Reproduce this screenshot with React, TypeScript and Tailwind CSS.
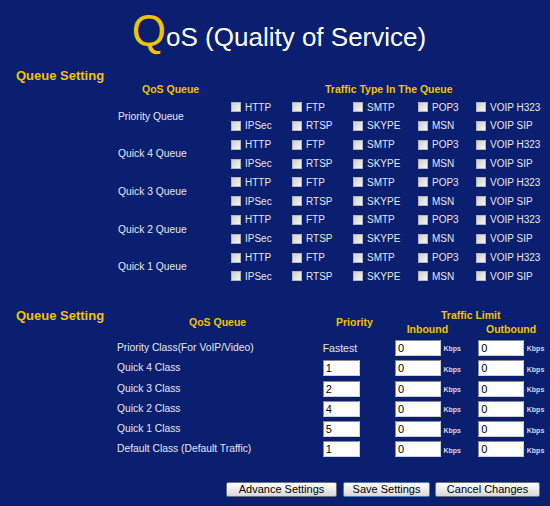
import React from "react";

const queues = ["Priority Queue", "Quick 4 Queue", "Quick 3 Queue", "Quick 2 Queue", "Quick 1 Queue"];
const typeRows = [
  ["HTTP", "FTP", "SMTP", "POP3", "VOIP H323"],
  ["IPSec", "RTSP", "SKYPE", "MSN", "VOIP SIP"],
];

const classes = [
  { name: "Priority Class(For VoIP/Video)", prio: null },
  { name: "Quick 4 Class", prio: "1" },
  { name: "Quick 3 Class", prio: "2" },
  { name: "Quick 2 Class", prio: "4" },
  { name: "Quick 1 Class", prio: "5" },
  { name: "Default Class (Default Traffic)", prio: "1" },
];

const Check = ({ label }: { label: string }) => (
  <label className="flex items-center h-[18.8px]">
    <span className="w-[10px] h-[10px] border border-[#b4b4b4] bg-linear-to-br from-[#cfcfcf] to-[#f6f6f6] shrink-0" />
    <span className="ml-[4px] text-[10px] text-[#e6e6ee] whitespace-nowrap">{label}</span>
  </label>
);

const Box = ({ value, width }: { value: string; width: string }) => (
  <input
    type="text"
    defaultValue={value}
    className={`${width} h-[16px] bg-white border border-[#8a8a8a] border-r-[#cfcfcf] border-b-[#cfcfcf] px-[2px] text-[11px] leading-[14px] text-black outline-none`}
  />
);

const Kbps = () => (
  <span className="ml-[2.5px] self-end mb-[1px] text-[7px] font-bold text-[#d6d6e6]">Kbps</span>
);

const Btn = ({ children, focus }: { children: React.ReactNode; focus?: boolean }) => (
  <button
    className={`h-[15px] rounded-[2px] border bg-linear-to-b from-[#ffffff] to-[#d8d8d8] text-[11px] leading-[13px] text-black ${
      focus ? "border-[#4a7ab8]" : "border-[#707070]"
    }`}
  >
    {children}
  </button>
);

export default function App() {
  return (
    <div className="w-[550px] h-[506px] bg-[#0b1f70] overflow-hidden font-['Liberation_Sans',Arial,sans-serif]">
      {/* title */}
      <div className="pt-[9px] pl-[8px] flex justify-center items-baseline">
        <span className="text-[44px] leading-[44px] text-[#f2c300]">Q</span>
        <span className="text-[26px] leading-[44px] text-white">oS (Quality of Service)</span>
      </div>

      {/* queue setting 1 */}
      <div className="flex mt-[12.5px]">
        <div className="w-[118px] pl-[16px] mt-[-4px]">
          <div className="text-[13px] leading-[16px] font-bold text-[#f2c300] whitespace-nowrap">Queue Setting</div>
        </div>
        <div className="w-[112px] pt-[11px]">
          <div className="h-[13px] leading-[13px] pl-[24px] text-[10.5px] font-bold text-[#f2c300]">QoS Queue</div>
          <div className="mt-[2.3px]">
            {queues.map((q) => (
              <div key={q} className="h-[37.6px] flex items-center text-[10.3px] text-[#e6e6ee]">
                {q}
              </div>
            ))}
          </div>
        </div>
        <div className="flex-1 pt-[11px]">
          <div className="h-[13px] leading-[13px] pl-[95px] text-[10.5px] font-bold text-[#f2c300]">
            Traffic Type In The Queue
          </div>
          <div className="mt-[2.3px] pl-[1px]">
            {queues.map((q) =>
              typeRows.map((row, i) => (
                <div key={q + i} className="grid grid-cols-[61px_61px_65px_58px_1fr]">
                  {row.map((t) => (
                    <Check key={t} label={t} />
                  ))}
                </div>
              ))
            )}
          </div>
        </div>
      </div>

      {/* queue setting 2 */}
      <div className="flex mt-[22px]">
        <div className="w-[117px] pl-[16px]">
          <div className="text-[13px] leading-[16px] font-bold text-[#f2c300] whitespace-nowrap">Queue Setting</div>
        </div>
        <div className="flex-1">
          <div className="flex h-[30px] text-[10.5px] font-bold text-[#f2c300]">
            <div className="w-[205.7px] pl-[72px] flex items-center pt-[1px]">QoS Queue</div>
            <div className="w-[72.3px] pl-[13.3px] flex items-center pt-[1px]">Priority</div>
            <div className="flex-1">
              <div className="h-[14px] leading-[14px] pl-[46px]">Traffic Limit</div>
              <div className="flex h-[14px] leading-[14px]">
                <span className="w-[91px] pl-[11.7px]">Inbound</span>
                <span>Outbound</span>
              </div>
            </div>
          </div>
          {classes.map((c) => (
            <div key={c.name} className="flex h-[20.3px] items-center">
              <div className="w-[205.7px] text-[10.3px] leading-[12px] text-[#e6e6ee] whitespace-nowrap">{c.name}</div>
              <div className="w-[72.3px] flex items-center">
                {c.prio === null ? (
                  <span className="text-[10.5px] leading-[12px] text-[#e6e6ee]">Fastest</span>
                ) : (
                  <Box value={c.prio} width="w-[37px]" />
                )}
              </div>
              <div className="w-[83.3px] flex h-[16px]">
                <Box value="0" width="w-[46px]" />
                <Kbps />
              </div>
              <div className="flex-1 flex h-[16px]">
                <Box value="0" width="w-[46px]" />
                <Kbps />
              </div>
            </div>
          ))}
        </div>
      </div>

      {/* buttons */}
      <div className="flex mt-[22.7px] pl-[226px] gap-[6px]">
        <div className="w-[111px] flex">
          <Btn>
            <span className="block w-[109px]">Advance Settings</span>
          </Btn>
        </div>
        <div className="w-[87px] flex">
          <Btn focus>
            <span className="block w-[85px]">Save Settings</span>
          </Btn>
        </div>
        <div className="w-[105px] flex ml-[-1px]">
          <Btn>
            <span className="block w-[103px]">Cancel Changes</span>
          </Btn>
        </div>
      </div>
    </div>
  );
}
